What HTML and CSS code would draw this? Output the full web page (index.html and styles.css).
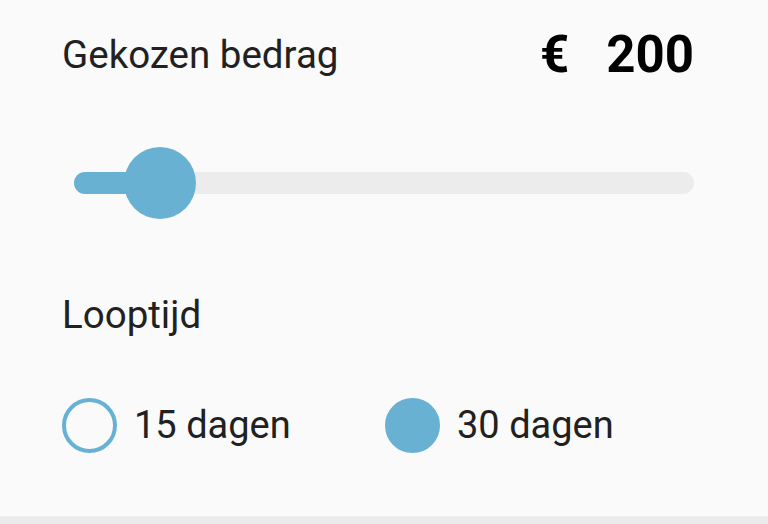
FILE: index.html
```html
<!DOCTYPE html>
<html lang="nl">
<head>
  <meta charset="UTF-8">
  <meta name="viewport" content="width=device-width, initial-scale=1.0">
  <title>Lening</title>
  <link rel="stylesheet" href="styles.css">
</head>
<body>
  <div class="panel">
    <!-- Amount -->
    <div class="header">
      <span class="label">Gekozen bedrag</span>
      <span class="amount"><span class="currency">€</span><span>200</span></span>
    </div>

    <div class="slider">
      <div class="track">
        <div class="fill" style="width: 86px;">
          <div class="thumb"></div>
        </div>
      </div>
    </div>

    <!-- Term -->
    <div class="term">
      <span class="label">Looptijd</span>
    </div>

    <div class="options">
      <div class="option">
        <span class="radio"></span>
        <span class="option-text">15 dagen</span>
      </div>
      <div class="option">
        <span class="radio checked"></span>
        <span class="option-text">30 dagen</span>
      </div>
    </div>
  </div>
  <div class="bottom-bar"></div>
</body>
</html>
```

FILE: styles.css
```css
/* Colours */
:root {
  --bg: #fafafa;
  --accent: #69b1d3;
  --track: #ececec;
  --text: #212121;
  --bar: #ebebeb;
}

* {
  margin: 0;
  padding: 0;
  box-sizing: border-box;
  font-family: Roboto, "Liberation Sans", Arial, sans-serif;
}

body {
  background: var(--bg);
  width: 768px;
  height: 524px;
  overflow: hidden;
  display: flex;
  flex-direction: column;
}

.panel {
  flex: 1;
  padding: 0 74px 0 62px;
  display: flex;
  flex-direction: column;
}

.header {
  height: 110px;
  display: flex;
  justify-content: space-between;
  align-items: center;
}

.label {
  font-size: 38.5px;
  color: var(--text);
  line-height: 44px;
}

.amount {
  font-size: 51px;
  font-weight: bold;
  color: #000;
  line-height: 44px;
  display: flex;
}

.currency {
  margin-right: 37px;
}

/* Slider */
.slider {
  height: 146px;
  display: flex;
  align-items: center;
  padding-left: 12px;
}

.track {
  flex: 1;
  height: 22px;
  border-radius: 11px;
  background: var(--track);
}

.fill {
  height: 100%;
  border-radius: 11px;
  background: var(--accent);
  position: relative;
}

.thumb {
  position: absolute;
  right: -36px;
  top: -25px;
  width: 72px;
  height: 72px;
  border-radius: 50%;
  background: var(--accent);
}

.term {
  height: 118px;
  display: flex;
  align-items: center;
}

/* Radio options */
.options {
  height: 102px;
  display: flex;
  align-items: center;
}

.option {
  display: flex;
  align-items: center;
  flex: none;
}

.option:first-child {
  width: 323px;
}

.radio {
  width: 55px;
  height: 55px;
  border-radius: 50%;
  border: 4px solid var(--accent);
  margin-right: 17px;
}

.radio.checked {
  background: var(--accent);
}

.option-text {
  font-size: 38px;
  color: var(--text);
  line-height: 44px;
}

.bottom-bar {
  height: 8px;
  background: var(--bar);
  border-top: 1px solid #f0f0f0;
}
```
